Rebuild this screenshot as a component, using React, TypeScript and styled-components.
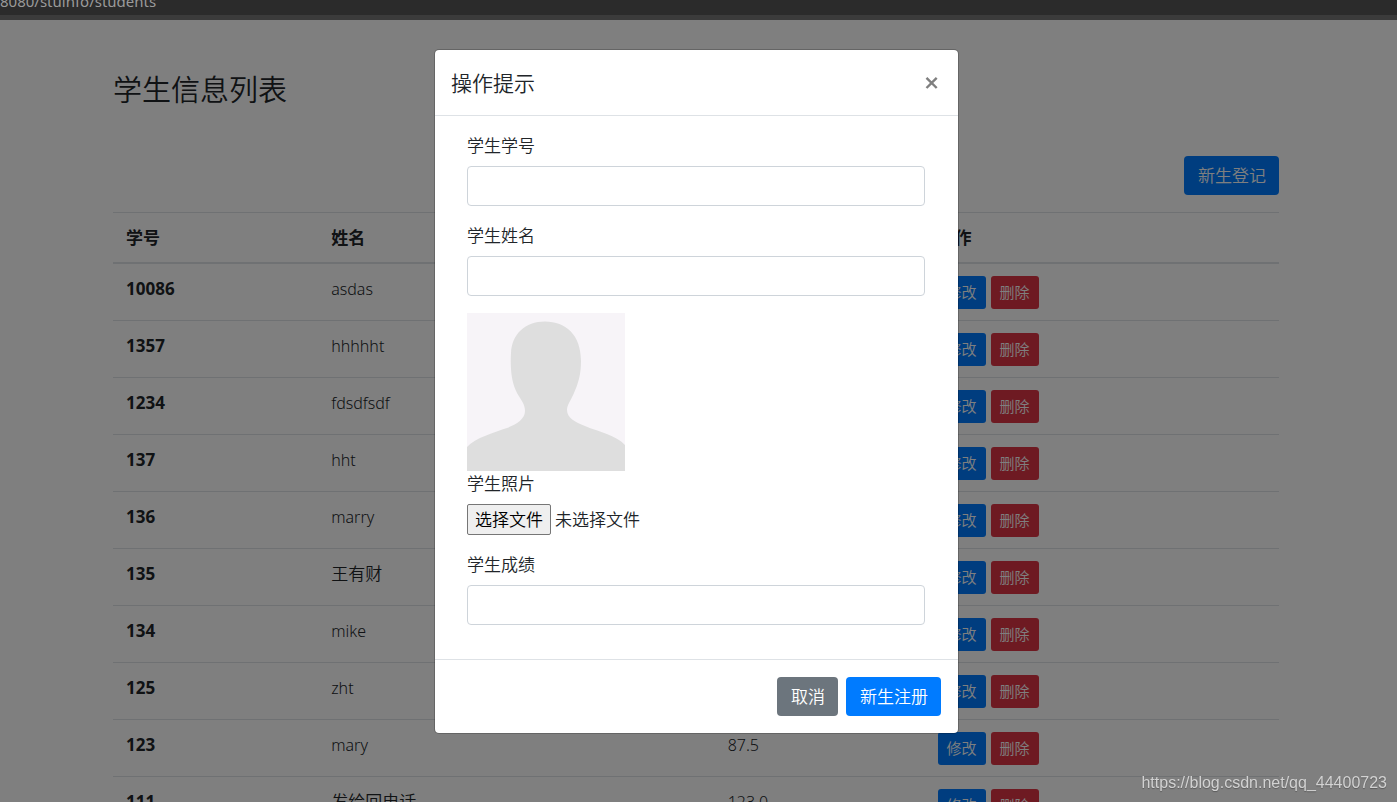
import React, { useId } from "react";
import styled, { createGlobalStyle, css } from "styled-components";

const GlobalStyle = createGlobalStyle`
  *, *::before, *::after { box-sizing: border-box; }
  body {
    margin: 0;
    overflow: hidden;
    background: #ffffff;
    color: #212529;
    font-family: "Noto Sans", "Noto Sans CJK SC", sans-serif;
    font-size: 17px;
    font-weight: 350;
    line-height: 25px;
  }
  button, input { font: inherit; margin: 0; }
`;

const Screen = styled.div`
  display: flex;
  flex-direction: column;
  height: 100vh;
  overflow: hidden;
`;

const AddressBar = styled.div`
  flex: none;
  display: flex;
  align-items: flex-end;
  height: 20px;
  overflow: hidden;
  background: #2b2b2b;
  border-bottom: 5px solid #3b3b3b;
  color: #9a9a9a;
  font-size: 15px;
  font-weight: 400;
  line-height: 28px;
`;

const Main = styled.main`
  position: relative;
  flex: 1;
  min-height: 0;
  overflow: hidden;
  padding-right: 5px;
`;

const Container = styled.div`
  max-width: 1166px;
  margin: 0 auto;
  padding-top: 50px;
`;

const PageTitle = styled.h1`
  margin: 0;
  font-size: 29px;
  line-height: 40px;
  font-weight: 350;
`;

const Toolbar = styled.div`
  display: flex;
  justify-content: flex-end;
  padding: 46px 0 17px;
`;

type Tone = "primary" | "danger" | "secondary";
const tones: Record<Tone, string> = {
  primary: "#007bff",
  danger: "#dc3545",
  secondary: "#6c757d",
};

const Button = styled.button<{ $tone: Tone; $small?: boolean }>`
  border: 0;
  border-radius: 4px;
  background: ${(p) => tones[p.$tone]};
  color: #ffffff;
  white-space: nowrap;
  cursor: pointer;
  ${(p) =>
    p.$small
      ? css`
          height: 33px;
          padding: 0 9px;
          font-size: 15px;
          border-radius: 3px;
        `
      : css`
          height: 39px;
          padding: 0 13px 0 14px;
        `}
`;

const Table = styled.table`
  width: 100%;
  table-layout: fixed;
  border-collapse: separate;
  border-spacing: 0;
  text-align: left;

  th { font-weight: 700; }

  thead th {
    padding: 12px 13px;
    border-top: 1px solid #dee2e6;
    border-bottom: 2px solid #dee2e6;
  }
  tbody th, tbody td {
    padding: 12px 13px 11px;
    vertical-align: top;
  }
  tbody tr + tr > * { border-top: 1px solid #dee2e6; }
`;

const HeadCell = styled.th<{ $share?: number }>`
  width: ${(p) => (p.$share ? `${p.$share}%` : "auto")};
`;

const Latin = styled.span`
  font-size: 16px;
`;

const Actions = styled.div`
  display: flex;
  gap: 5px;
`;

const Backdrop = styled.div`
  position: absolute;
  inset: 0;
  display: flex;
  justify-content: center;
  align-items: flex-start;
  padding: 29px 4px 0 0;
  background: rgba(0, 0, 0, 0.5);
`;

const Dialog = styled.section`
  width: 100%;
  max-width: 525px;
  border: 1px solid rgba(0, 0, 0, 0.2);
  border-radius: 5px;
  background: #ffffff;
  background-clip: padding-box;
`;

const DialogHeader = styled.header`
  display: flex;
  justify-content: space-between;
  align-items: center;
  height: 66px;
  padding: 0 20px 0 16px;
  border-bottom: 1px solid #dee2e6;
`;

const DialogTitle = styled.h2`
  margin: 0;
  font-size: 21px;
  line-height: 32px;
  font-weight: 350;
`;

const CloseButton = styled.button`
  display: flex;
  padding: 0;
  border: 0;
  background: none;
  color: #7f7f7f;
  cursor: pointer;
`;

const Form = styled.form`
  display: flex;
  flex-direction: column;
  gap: 17px;
  padding: 17px 33px 34px 32px;
`;

const Field = styled.div`
  display: flex;
  flex-direction: column;
  gap: 8px;
`;

const TextInput = styled.input`
  width: 100%;
  height: 40px;
  padding: 6px 13px;
  border: 1px solid #ced4da;
  border-radius: 4px;
  background: #ffffff;
  color: #495057;
`;

const PhotoField = styled.div`
  display: flex;
  flex-direction: column;
`;

const Avatar = styled.svg`
  display: block;
  width: 158px;
  height: 158px;
`;

const FilePicker = styled.div`
  position: relative;
  display: flex;
  align-items: center;
  gap: 4px;
  margin-top: 8px;
`;

const FileInput = styled.input`
  position: absolute;
  inset: 0;
  width: 100%;
  opacity: 0;
  cursor: pointer;
`;

const FileButton = styled.span`
  padding: 2px 7px;
  border: 1px solid #767676;
  border-radius: 2px;
  background: #efefef;
  color: #000000;
`;

const DialogFooter = styled.footer`
  display: flex;
  justify-content: flex-end;
  gap: 8px;
  padding: 17px;
  border-top: 1px solid #dee2e6;
`;

const Watermark = styled.a`
  position: fixed;
  right: 10px;
  bottom: 9px;
  color: #d2d2d2;
  font: 400 16px/20px "Liberation Sans", Arial, sans-serif;
  text-decoration: none;
  text-shadow: 0 1px 1px rgba(0, 0, 0, 0.3);
`;

interface Student {
  id: string;
  name: string;
  score?: string;
}

const students: Student[] = [
  { id: "10086", name: "asdas" },
  { id: "1357", name: "hhhhht" },
  { id: "1234", name: "fdsdfsdf" },
  { id: "137", name: "hht" },
  { id: "136", name: "marry" },
  { id: "135", name: "王有财" },
  { id: "134", name: "mike" },
  { id: "125", name: "zht" },
  { id: "123", name: "mary", score: "87.5" },
  { id: "111", name: "发给回电话", score: "123.0" },
];

const isLatin = (text: string) => /^[\x20-\x7e]+$/.test(text);

function LabeledInput({ label }: { label: string }) {
  const id = useId();
  return (
    <Field>
      <label htmlFor={id}>{label}</label>
      <TextInput id={id} type="text" />
    </Field>
  );
}

function StudentTable() {
  return (
    <Table>
      <thead>
        <tr>
          <HeadCell scope="col" $share={17.6}>学号</HeadCell>
          <HeadCell scope="col" $share={34}>姓名</HeadCell>
          <HeadCell scope="col" $share={18}>成绩</HeadCell>
          <HeadCell scope="col">操作</HeadCell>
        </tr>
      </thead>
      <tbody>
        {students.map((s) => (
          <tr key={s.id}>
            <th scope="row">{s.id}</th>
            <td>{isLatin(s.name) ? <Latin>{s.name}</Latin> : s.name}</td>
            <td>{s.score && <Latin>{s.score}</Latin>}</td>
            <td>
              <Actions>
                <Button type="button" $tone="primary" $small>修改</Button>
                <Button type="button" $tone="danger" $small>删除</Button>
              </Actions>
            </td>
          </tr>
        ))}
      </tbody>
    </Table>
  );
}

function RegisterDialog() {
  return (
    <Dialog role="dialog" aria-modal="true" aria-labelledby="dialog-title">
      <DialogHeader>
        <DialogTitle id="dialog-title">操作提示</DialogTitle>
        <CloseButton type="button" aria-label="关闭">
          <svg width="13" height="13" viewBox="0 0 13 13" fill="none" stroke="currentColor" strokeWidth="2.4">
            <path d="M1.5 1.8 11.7 12M11.7 1.8 1.5 12" />
          </svg>
        </CloseButton>
      </DialogHeader>
      <Form id="register">
        <LabeledInput label="学生学号" />
        <LabeledInput label="学生姓名" />
        <PhotoField>
          <Avatar viewBox="0 0 158 158" aria-hidden="true">
            <rect width="158" height="158" fill="#f7f4f8" />
            <path
              fill="#dedede"
              d="M78 8.500C58 8.500 45 21 44 40C43 58 45 70 50 80C54 87 58 91 58 98C58 106 50 111 40 115C28 119 8 125 0 134V158H158V132C149 122 132 119 118 113C108 109 100 105 100 97C100 92 104 87 107 80C111 71 114 62 114 48C114 22 99 8.500 78 8.500Z"
            />
          </Avatar>
          <label htmlFor="photo">学生照片</label>
          <FilePicker>
            <FileButton aria-hidden="true">选择文件</FileButton>
            <span aria-hidden="true">未选择文件</span>
            <FileInput id="photo" type="file" accept="image/*" />
          </FilePicker>
        </PhotoField>
        <LabeledInput label="学生成绩" />
      </Form>
      <DialogFooter>
        <Button type="button" $tone="secondary">取消</Button>
        <Button type="submit" form="register" $tone="primary">新生注册</Button>
      </DialogFooter>
    </Dialog>
  );
}

export default function App() {
  return (
    <Screen>
      <GlobalStyle />
      <AddressBar>8080/stuinfo/students</AddressBar>
      <Main>
        <Container>
          <PageTitle>学生信息列表</PageTitle>
          <Toolbar>
            <Button type="button" $tone="primary">新生登记</Button>
          </Toolbar>
          <StudentTable />
        </Container>
        <Backdrop>
          <RegisterDialog />
        </Backdrop>
      </Main>
      <Watermark href="https://blog.csdn.net/qq_44400723">https://blog.csdn.net/qq_44400723</Watermark>
    </Screen>
  );
}
